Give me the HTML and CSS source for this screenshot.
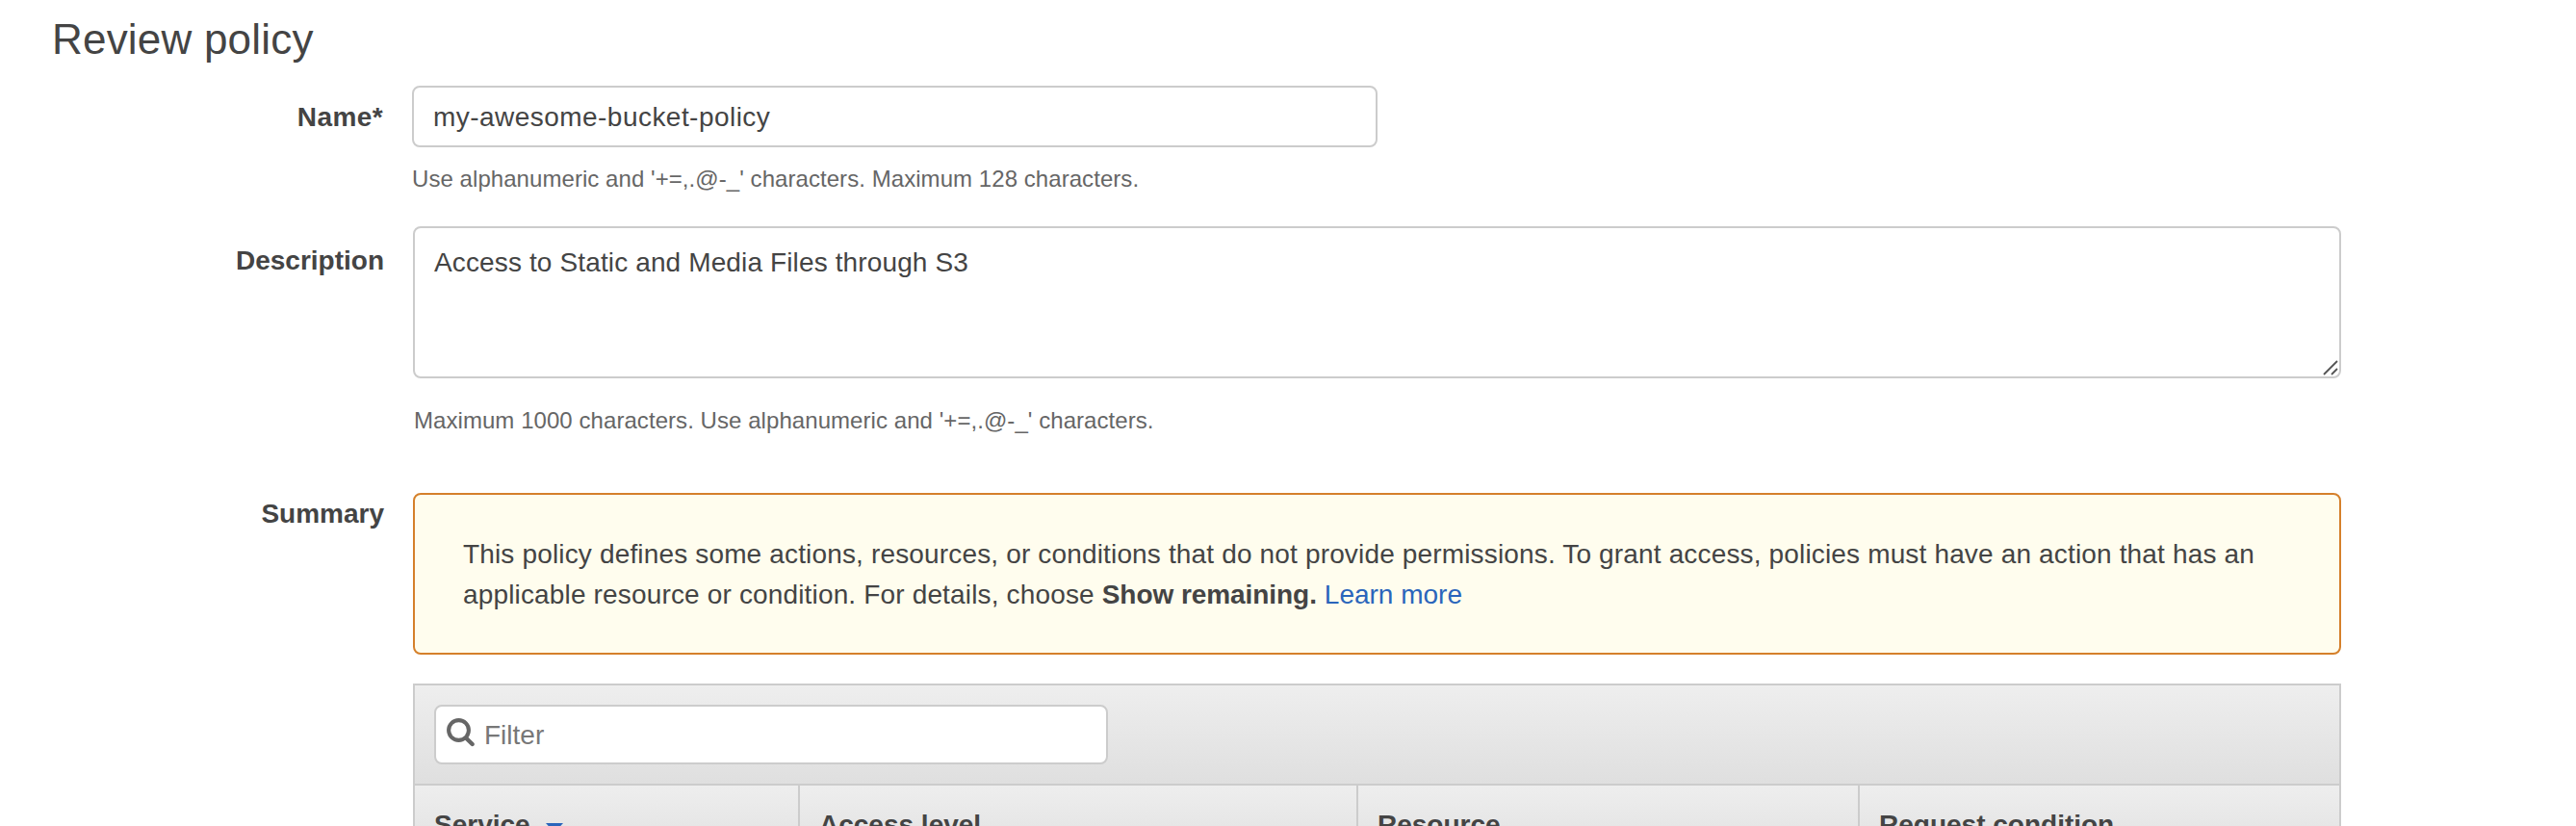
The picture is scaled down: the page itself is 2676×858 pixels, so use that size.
FILE: index.html
```html
<!DOCTYPE html>
<html lang="en">
<head>
<meta charset="utf-8">
<title>Review policy</title>
<link rel="stylesheet" href="styles.css">
</head>
<body>
<main class="page">
  <h1 class="title"><span>Review policy</span></h1>

  <section class="row row-name">
    <div class="label"><span class="t-name">Name*</span></div>
    <div class="field field-name">
      <div class="input"><span class="t-input">my-awesome-bucket-policy</span></div>
      <p class="hint"><span>Use alphanumeric and '+=,.@-_' characters. Maximum 128 characters.</span></p>
    </div>
  </section>

  <section class="row row-description">
    <div class="label"><span>Description</span></div>
    <div class="field">
      <div class="textarea">
        <span class="t-area">Access to Static and Media Files through S3</span>
        <svg class="grip" width="16" height="16" viewBox="0 0 16 16"><path d="M1 15L15 1M9 15L15 9" stroke="#555" stroke-width="1.8" fill="none"/></svg>
      </div>
      <p class="hint"><span>Maximum 1000 characters. Use alphanumeric and '+=,.@-_' characters.</span></p>
    </div>
  </section>

  <section class="row row-summary">
    <div class="label"><span>Summary</span></div>
    <div class="field">
      <div class="alert">
        <div>This policy defines some actions, resources, or conditions that do not provide permissions. To grant access, policies must have an action that has an</div>
        <div>applicable resource or condition. For details, choose <b class="strong">Show remaining.</b> <a class="link">Learn more</a></div>
      </div>
      <div class="table">
        <div class="toolbar">
          <div class="filter">
            <svg class="search" width="32" height="32" viewBox="0 0 32 32"><circle cx="13.5" cy="13.5" r="10.4" fill="none" stroke="#666" stroke-width="4.1"/><path d="M21 21.5L27.7 28" stroke="#666" stroke-width="4.4" stroke-linecap="round"/></svg>
            <span class="placeholder">Filter</span>
          </div>
        </div>
        <div class="head">
          <div class="cell"><span>Service</span><svg class="sort" width="18" height="10" viewBox="0 0 18 10"><path d="M0 0H18L9 10Z" fill="#2a65bb"/></svg></div>
          <div class="cell"><span>Access level</span></div>
          <div class="cell"><span>Resource</span></div>
          <div class="cell"><span>Request condition</span></div>
        </div>
      </div>
    </div>
  </section>
</main>
</body>
</html>
```
FILE: styles.css
```css
* { box-sizing: border-box; }
html, body { margin: 0; height: 858px; overflow: hidden; }
body {
  background: #fff;
  color: #444;
  font-family: "Liberation Sans", Arial, sans-serif;
  font-size: 28px;
  line-height: 42px;
}
.page { width: 2676px; height: 858px; overflow: hidden; }
.title { margin: 0; padding: 15px 0 0 54px; height: 89px; font-size: 44px; line-height: 52px; font-weight: 400; letter-spacing: 0.2px; }
.row { display: grid; grid-template-columns: 399px 2003px; column-gap: 30px; }
.row-name { height: 146px; }
.row-description { height: 277px; }
.label { text-align: right; font-weight: 700; }
.row-name .label { padding: 12px 1px 0 0; }
.row-description .label { padding-top: 15px; }
.row-summary .label { padding-top: 1px; }
.t-name { letter-spacing: 0.4px; }
.field-name { margin-left: -1px; }
.input { width: 1003px; height: 64px; border: 2px solid #ccc; border-radius: 8px; padding: 10px 20px; background: #fff; }
.t-input { letter-spacing: 0.46px; }
.hint { margin: 0; color: #666; font-size: 24px; line-height: 36px; letter-spacing: 0.06px; }
.row-name .hint { padding-top: 15px; }
.row-description .hint { padding: 26px 0 0 1px; }
.textarea { position: relative; height: 158px; border: 2px solid #ccc; border-radius: 8px; padding: 15px 20px; background: #fff; }
.t-area { letter-spacing: 0.13px; }
.grip { position: absolute; right: 1px; bottom: 1px; }
.alert { height: 168px; border: 2px solid #d5802b; border-radius: 8px; background: #fffdee; padding: 41px 50px; white-space: nowrap; letter-spacing: 0.157px; }
.strong { letter-spacing: -0.06px; }
.link { color: #2a65bb; letter-spacing: 0; }
.table { margin-top: 30px; border: 2px solid #ccc; }
.toolbar { height: 104px; padding: 20px; border-bottom: 2px solid #ccc; background: linear-gradient(#eee, #dfdfdf); }
.filter { display: flex; width: 700px; height: 62px; border: 2px solid #ccc; border-radius: 8px; background: #fff; color: #777; line-height: 58px; }
.search { margin: 11px 0 0 10px; }
.placeholder { margin-left: 8px; padding-top: 1px; }
.head { display: grid; grid-template-columns: 400px 580px 521px 1fr; height: 80px; background: linear-gradient(#eee, #dfdfdf); font-weight: 700; }
.cell { display: flex; padding: 20px 0 0 20px; border-right: 2px solid #ccc; }
.cell:last-child { border-right: 0; }
.sort { margin: 19px 0 0 16px; }
```
